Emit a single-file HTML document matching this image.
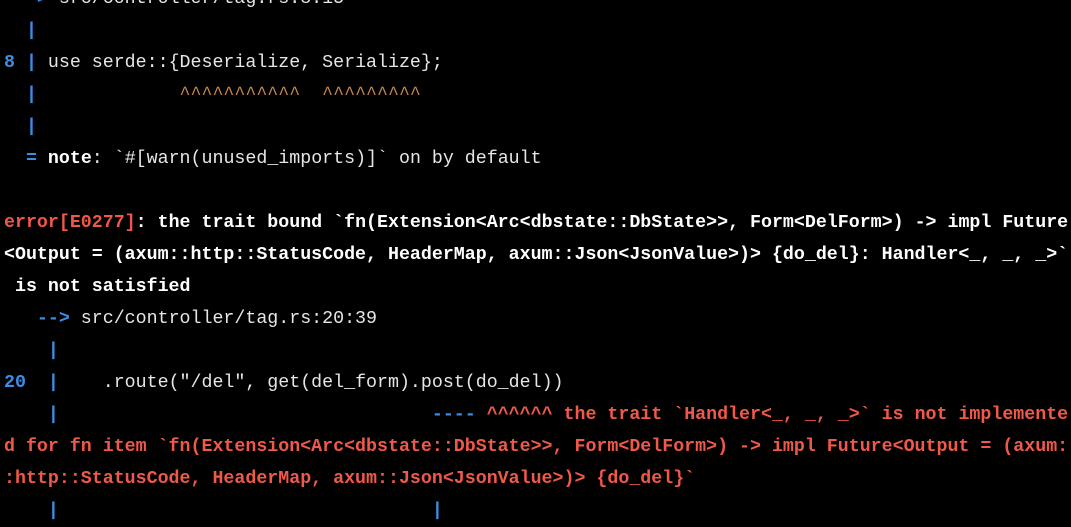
<!DOCTYPE html>
<html><head><style>
html,body{margin:0;padding:0;background:#000;width:1071px;height:518px;overflow:hidden}
pre{position:absolute;left:4px;top:-17px;margin:0;font-family:"Liberation Mono",monospace;font-size:18.3px;line-height:32px;color:#e6e6e6;letter-spacing:0}
.b{color:#3a8ee6;font-weight:bold}
.o{color:#c8874e}
.r{color:#f0584a;font-weight:bold}
.w{font-weight:bold;color:#fff}
</style></head><body>
<pre><span class="b"> --&gt;</span> src/controller/tag.rs:8:15
<span class="b">  |</span>
<span class="b">8 |</span> use serde::{Deserialize, Serialize};
<span class="b">  |</span>             <span class="o">^^^^^^^^^^^  ^^^^^^^^^</span>
<span class="b">  |</span>
<span class="b">  =</span> <span class="w">note</span>: `#[warn(unused_imports)]` on by default

<span class="r">error[E0277]</span><span class="w">: the trait bound `fn(Extension&lt;Arc&lt;dbstate::DbState&gt;&gt;, Form&lt;DelForm&gt;) -&gt; impl Future</span>
<span class="w">&lt;Output = (axum::http::StatusCode, HeaderMap, axum::Json&lt;JsonValue&gt;)&gt; {do_del}: Handler&lt;_, _, _&gt;`</span>
<span class="w"> is not satisfied</span>
<span class="b">   --&gt;</span> src/controller/tag.rs:20:39
<span class="b">    |</span>
<span class="b">20  |</span>    .route("/del", get(del_form).post(do_del))
<span class="b">    |                                  ----</span> <span class="r">^^^^^^ the trait `Handler&lt;_, _, _&gt;` is not implemente</span>
<span class="r">d for fn item `fn(Extension&lt;Arc&lt;dbstate::DbState&gt;&gt;, Form&lt;DelForm&gt;) -&gt; impl Future&lt;Output = (axum:</span>
<span class="r">:http::StatusCode, HeaderMap, axum::Json&lt;JsonValue&gt;)&gt; {do_del}`</span>
<span class="b">    |                                  |</span>
</pre>
</body></html>
